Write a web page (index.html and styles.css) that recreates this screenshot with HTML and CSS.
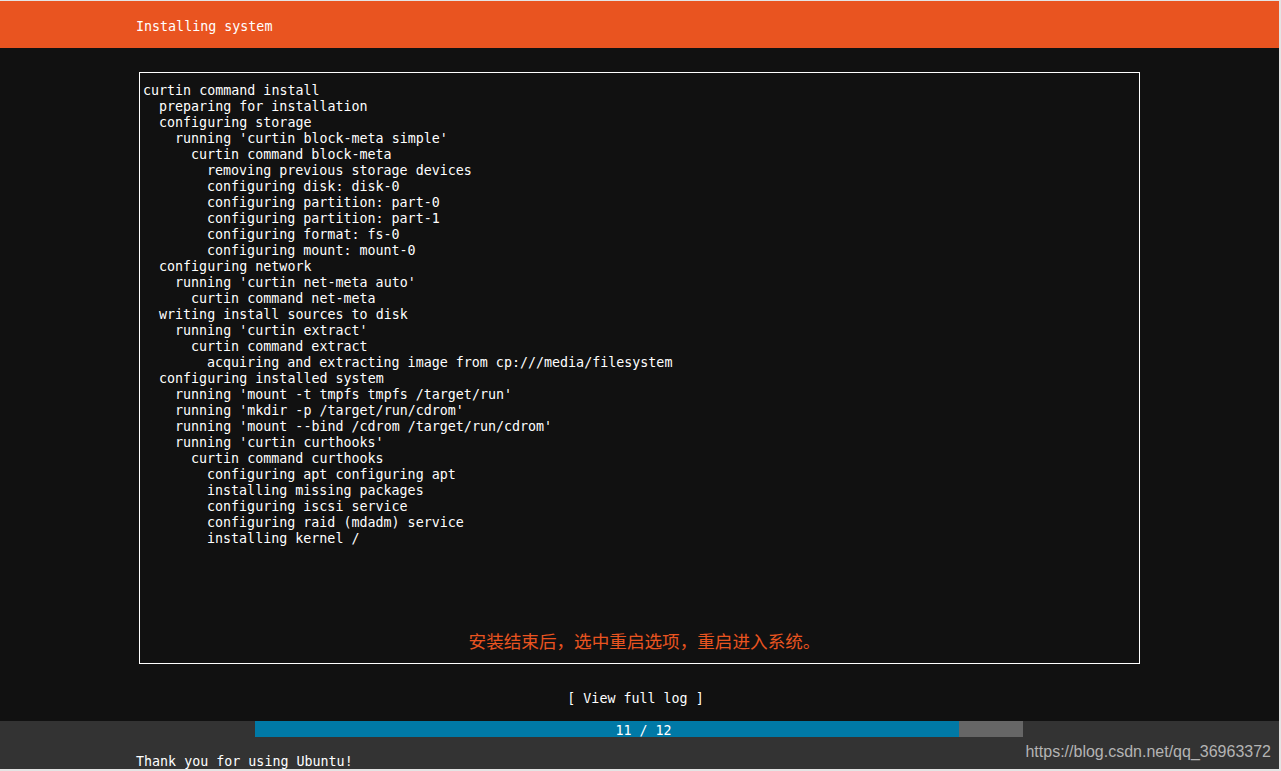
FILE: index.html
```html
<!DOCTYPE html>
<html>

<head>
    <meta charset="UTF-8">
    <title>Installing system</title>
    <link rel="stylesheet" href="styles.css">
</head>

<body>
    <div class="screen">
        <div class="header">Installing system</div>

        <div class="main">
            <div class="log-box">
                <div class="log">
                    <div class="line">curtin command install</div>
                    <div class="line l1">preparing for installation</div>
                    <div class="line l1">configuring storage</div>
                    <div class="line l2">running 'curtin block-meta simple'</div>
                    <div class="line l3">curtin command block-meta</div>
                    <div class="line l4">removing previous storage devices</div>
                    <div class="line l4">configuring disk: disk-0</div>
                    <div class="line l4">configuring partition: part-0</div>
                    <div class="line l4">configuring partition: part-1</div>
                    <div class="line l4">configuring format: fs-0</div>
                    <div class="line l4">configuring mount: mount-0</div>
                    <div class="line l1">configuring network</div>
                    <div class="line l2">running 'curtin net-meta auto'</div>
                    <div class="line l3">curtin command net-meta</div>
                    <div class="line l1">writing install sources to disk</div>
                    <div class="line l2">running 'curtin extract'</div>
                    <div class="line l3">curtin command extract</div>
                    <div class="line l4">acquiring and extracting image from cp:///media/filesystem</div>
                    <div class="line l1">configuring installed system</div>
                    <div class="line l2">running 'mount -t tmpfs tmpfs /target/run'</div>
                    <div class="line l2">running 'mkdir -p /target/run/cdrom'</div>
                    <div class="line l2">running 'mount --bind /cdrom /target/run/cdrom'</div>
                    <div class="line l2">running 'curtin curthooks'</div>
                    <div class="line l3">curtin command curthooks</div>
                    <div class="line l4">configuring apt configuring apt</div>
                    <div class="line l4">installing missing packages</div>
                    <div class="line l4">configuring iscsi service</div>
                    <div class="line l4">configuring raid (mdadm) service</div>
                    <div class="line l4">installing kernel /</div>
                </div>
                <div class="note">安装结束后，选中重启选项，重启进入系统。</div>
            </div>

            <div class="view-log">[ View full log ]</div>
        </div>

        <div class="footer">
            <div class="progress">
                <div class="progress-fill" style="width: 91.667%"></div>
                <div class="progress-text">11 / 12</div>
            </div>
            <div class="thanks">Thank you for using Ubuntu!</div>
            <div class="watermark">https://blog.csdn.net/qq_36963372</div>
        </div>
    </div>
</body>

</html>
```

FILE: styles.css
```css
body {
    margin: 0;
    background: #e4e4e4;
    font-family: "DejaVu Sans Mono", "Liberation Mono", monospace;
    font-size: 13.33px;
    color: #ffffff;
}

.screen {
    width: 1279px;
    height: 768px;
    margin-top: 1px;
    background: #111111;
    display: flex;
    flex-direction: column;
    position: relative;
}

.header {
    height: 47px;
    padding-left: 136px;
    background: #e95420;
    line-height: 51px;
    flex-shrink: 0;
}

.main {
    flex: 1;
    padding-top: 24px;
}

.log-box {
    margin-left: 139px;
    width: 999px;
    height: 590px;
    border: 1px solid #ffffff;
    display: flex;
    flex-direction: column;
    justify-content: space-between;
}

.log {
    padding: 10px 0 0 3px;
}

.line {
    height: 16px;
    line-height: 16px;
    white-space: pre;
}

.l1 { padding-left: 16px; }
.l2 { padding-left: 32px; }
.l3 { padding-left: 48px; }
.l4 { padding-left: 64px; }

.note {
    text-align: center;
    font-family: "Noto Sans CJK SC", sans-serif;
    font-size: 17.6px;
    line-height: 20px;
    color: #e95420;
    margin-bottom: 12px;
    padding-left: 10px;
}

.view-log {
    text-align: center;
    margin-top: 27px;
    line-height: 16px;
    padding-right: 8px;
}

.footer {
    height: 48px;
    background: #333333;
    flex-shrink: 0;
}

.progress {
    position: relative;
    margin-left: 255px;
    width: 768px;
    height: 16px;
    background: #666666;
}

.progress-fill {
    height: 16px;
    background: #0079a6;
}

.progress-text {
    position: absolute;
    top: 0;
    left: 9px;
    right: 0;
    text-align: center;
    line-height: 19px;
}

.thanks {
    padding-left: 136px;
    margin-top: 17px;
    line-height: 16px;
}

.watermark {
    position: absolute;
    right: 8px;
    bottom: 8px;
    font-family: "Liberation Sans", Arial, sans-serif;
    font-size: 16px;
    color: #b4b4b4;
}
```
